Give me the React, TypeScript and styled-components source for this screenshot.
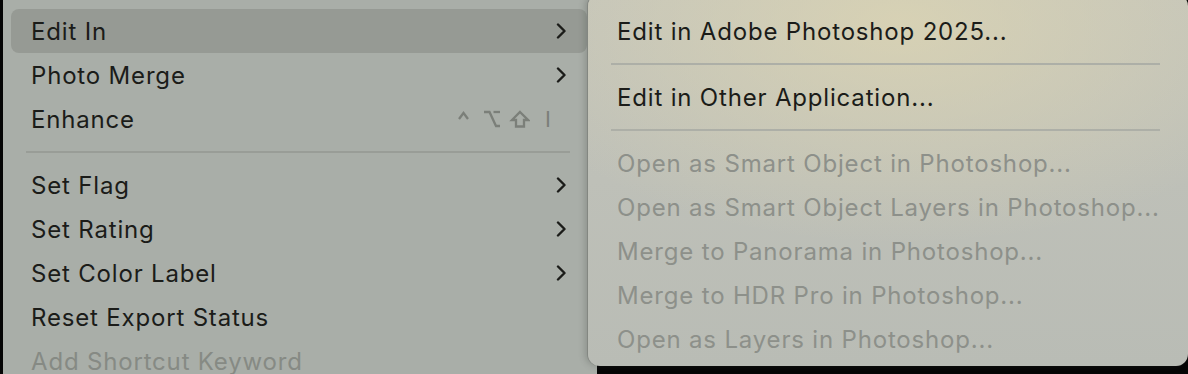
import React from "react";
import styled, { createGlobalStyle } from "styled-components";

const GlobalStyle = createGlobalStyle`
  html, body {
    margin: 0;
    padding: 0;
    background: #000;
  }
  body {
    font-family: Inter, "Noto Sans", "DejaVu Sans", sans-serif;
    -webkit-font-smoothing: antialiased;
  }
`;

const Stage = styled.div`
  position: relative;
  width: 1188px;
  height: 374px;
  overflow: hidden;
  background: #050505;
  display: flex;
`;

const MainMenu = styled.div`
  margin-left: 3px;
  width: 594px;
  height: 400px;
  padding: 9px 0 0 8px;
  box-sizing: border-box;
  background: #a9aea8;
  display: flex;
  flex-direction: column;
`;

const Row = styled.div<{ $active?: boolean; $disabled?: boolean }>`
  display: flex;
  align-items: center;
  height: 44px;
  flex: 0 0 44px;
  width: 576px;
  box-sizing: border-box;
  padding: 0 19px 0 20px;
  border-radius: 8px;
  background: ${({ $active }) => ($active ? "#969a94" : "transparent")};
  color: ${({ $disabled }) => ($disabled ? "#868a84" : "#1b1c19")};
  font-size: 24px;
  letter-spacing: 0.82px;
  white-space: nowrap;
`;

const Label = styled.span`
  flex: 1;
`;

const Shortcut = styled.span`
  display: flex;
  align-items: center;
  gap: 15px;
  margin-right: 17px;
  color: #7b7f79;
`;

const KeyLetter = styled.span`
  font-family: Inter, sans-serif;
  font-size: 22px;
  letter-spacing: 0;
  line-height: 1;
`;

const Separator = styled.div<{ $inset: number; $right: number; $color: string }>`
  height: 22px;
  flex: 0 0 22px;
  margin: 0 ${({ $right }) => $right}px 0 ${({ $inset }) => $inset}px;
  display: flex;
  align-items: center;
  &::after {
    content: "";
    flex: 1;
    height: 2px;
    background: ${({ $color }) => $color};
  }
`;

const SubMenu = styled.div`
  position: absolute;
  left: 588px;
  top: -6px;
  width: 600px;
  height: 372px;
  box-sizing: border-box;
  padding-top: 15px;
  border-radius: 12px;
  background:
    radial-gradient(ellipse 420px 220px at 52% 8%, rgba(222, 214, 178, 0.75), rgba(222, 214, 178, 0) 100%),
    linear-gradient(180deg, #c3c4bb 0%, #bec0b8 50%, #b9bcb5 100%);
  box-shadow: -1px 0 0 rgba(120, 124, 118, 0.6), -3px 0 6px rgba(60, 64, 58, 0.25);
  display: flex;
  flex-direction: column;
`;

const SubRow = styled(Row)`
  width: 600px;
  padding-left: 29px;
  color: ${({ $disabled }) => ($disabled ? "#8d908a" : "#1b1c19")};
`;

const Chevron = () => (
  <svg width="14" height="16" viewBox="0 0 14 16">
    <polyline
      points="4,1.5 10.5,8 4,14.5"
      fill="none"
      stroke="#1b1c19"
      strokeWidth="2.4"
      strokeLinecap="round"
      strokeLinejoin="round"
    />
  </svg>
);

const ModifierKeys = () => (
  <svg width="72" height="18" viewBox="0 0 72 18" fill="none" stroke="#7b7f79" strokeWidth="2.3" strokeLinejoin="miter">
    {/* control */}
    <polyline points="1,9 5.5,3 10,9" />
    {/* option */}
    <polyline points="26,2 31.5,2 38,16 42,16" />
    <line x1="35.5" y1="2" x2="42" y2="2" />
    {/* shift */}
    <path d="M62 2 L70 10 L66 10 L66 16.5 L58 16.5 L58 10 L54 10 Z" />
  </svg>
);

type Item =
  | { label: string; sub?: boolean; shortcut?: boolean; disabled?: boolean; active?: boolean }
  | "sep";

const mainItems: Item[] = [
  { label: "Edit In", sub: true, active: true },
  { label: "Photo Merge", sub: true },
  { label: "Enhance", shortcut: true },
  "sep",
  { label: "Set Flag", sub: true },
  { label: "Set Rating", sub: true },
  { label: "Set Color Label", sub: true },
  { label: "Reset Export Status" },
  { label: "Add Shortcut Keyword", disabled: true },
];

const subItems: Item[] = [
  { label: "Edit in Adobe Photoshop 2025..." },
  "sep",
  { label: "Edit in Other Application..." },
  "sep",
  { label: "Open as Smart Object in Photoshop...", disabled: true },
  { label: "Open as Smart Object Layers in Photoshop...", disabled: true },
  { label: "Merge to Panorama in Photoshop...", disabled: true },
  { label: "Merge to HDR Pro in Photoshop...", disabled: true },
  { label: "Open as Layers in Photoshop...", disabled: true },
];

export default function App() {
  return (
    <>
      <GlobalStyle />
      <Stage>
        <MainMenu>
          {mainItems.map((item, i) =>
            item === "sep" ? (
              <Separator key={i} $inset={15} $right={27} $color="#999d97" />
            ) : (
              <Row key={i} $active={item.active} $disabled={item.disabled}>
                <Label>{item.label}</Label>
                {item.shortcut && (
                  <Shortcut>
                    <ModifierKeys />
                    <KeyLetter>I</KeyLetter>
                  </Shortcut>
                )}
                {item.sub && <Chevron />}
              </Row>
            )
          )}
        </MainMenu>
        <SubMenu>
          {subItems.map((item, i) =>
            item === "sep" ? (
              <Separator key={i} $inset={23} $right={28} $color="#adafa7" />
            ) : (
              <SubRow key={i} $disabled={item.disabled}>
                <Label>{item.label}</Label>
              </SubRow>
            )
          )}
        </SubMenu>
      </Stage>
    </>
  );
}
